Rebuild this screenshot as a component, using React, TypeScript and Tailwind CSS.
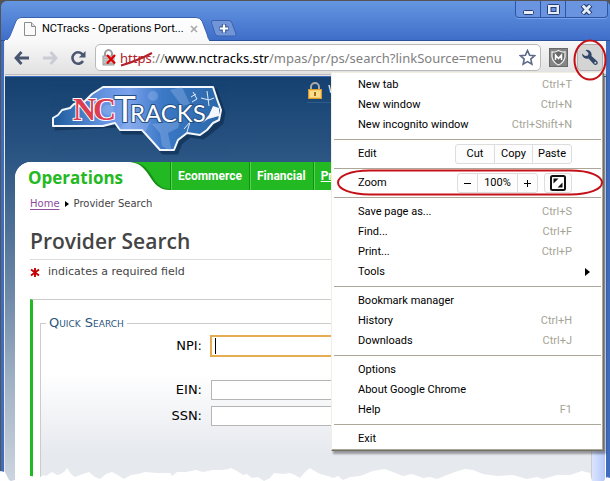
import type { ReactNode } from 'react';

interface MenuItem {
  label: string;
  shortcut?: string;
  submenu?: boolean;
}

const tabItems: MenuItem[] = [
  { label: 'New tab', shortcut: 'Ctrl+T' },
  { label: 'New window', shortcut: 'Ctrl+N' },
  { label: 'New incognito window', shortcut: 'Ctrl+Shift+N' },
];

const pageItems: MenuItem[] = [
  { label: 'Save page as...', shortcut: 'Ctrl+S' },
  { label: 'Find...', shortcut: 'Ctrl+F' },
  { label: 'Print...', shortcut: 'Ctrl+P' },
  { label: 'Tools', submenu: true },
];

const historyItems: MenuItem[] = [
  { label: 'Bookmark manager' },
  { label: 'History', shortcut: 'Ctrl+H' },
  { label: 'Downloads', shortcut: 'Ctrl+J' },
];

const optionItems: MenuItem[] = [
  { label: 'Options' },
  { label: 'About Google Chrome' },
  { label: 'Help', shortcut: 'F1' },
];

const navItems = ['Ecommerce', 'Financial', 'Pr'];

// Torn paper edge along the bottom of the window
const TORN_EDGE =
  '0,7 5,8 9,16 11,17 30,12 40,13 44,11 46,12 52,8 57,11 61,10 65,7 67,4 71,10 75,13 80,11 89,8 95,13 100,15 106,10 112,8 116,10 124,15 131,11 138,10 145,8 157,9 170,9 172,12 177,8 186,8 196,6 203,8 213,6 222,6 229,5 231,4 237,7 243,11 247,10 252,14 258,13 264,17 270,14 274,9 283,10 290,9 295,11 300,14 305,8 310,4 313,6 320,10 328,12 333,14 338,12 343,16 350,13 360,12 373,7 385,5 393,8 403,12 412,10 423,14 430,13 437,15 447,11 455,8 465,5 473,6 483,10 497,12 513,11 527,15 537,13 543,15 557,11 570,11 582,7 590,9 592,17 603,18 607,13 610,14 610,22 0,22';

function TitleBar() {
  return (
    <div className="flex h-10 items-start justify-between border-b border-[#2b529c] bg-gradient-to-b from-[#6596e1] to-[#3f6ec9]">
      <div className="flex h-full items-end pl-[3px]">
        <div className="relative -mb-px flex h-6 w-[206px] items-center pb-px">
          <svg className="absolute inset-0" width="206" height="24" viewBox="0 0 206 24">
            <defs>
              <linearGradient id="tab" x1="0" y1="0" x2="0" y2="1">
                <stop offset="0" stopColor="#ffffff" />
                <stop offset="1" stopColor="#f8f8f8" />
              </linearGradient>
            </defs>
            <path d="M0 24C5 23 6 19 8 14L12 4Q13.500 .5 17 .5H192Q196 .5 198 4L203 17Q204 22 206 24Z" fill="url(#tab)" stroke="#3861ae" />
            <path d="M1 24H205" stroke="#f8f8f8" strokeWidth="2" />
          </svg>
          <svg className="relative ml-5" width="12" height="14" viewBox="0 0 12 14">
            <path d="M.5 .5H7.500L11.500 4.500V13.500H.5Z" fill="#fafafa" stroke="#8d8d8d" />
            <path d="M7.500 .5V4.500H11.500" fill="#ddd" stroke="#8d8d8d" />
          </svg>
          <span className="relative ml-[6px] flex-1 font-['Roboto',sans-serif] text-[11px] leading-4 whitespace-nowrap text-black">
            NCTracks - Operations Port...
          </span>
          <button type="button" aria-label="Close tab" className="relative mr-3">
            <svg width="8" height="8" viewBox="0 0 8 8">
              <path d="M1 1L7 7M7 1L1 7" stroke="#aaa" strokeWidth="1.700" />
            </svg>
          </button>
        </div>
        <button type="button" aria-label="Open new tab" className="mb-[3px]">
          <svg width="27" height="17" viewBox="0 0 27 17">
            <path d="M3 .5H19Q21 .5 22 3L26 14Q26.500 16 24.500 16H8Q6 16 5 13.500L1.500 3Q1 .5 3 .5Z" fill="#7295d8" stroke="#3b62ad" />
            <path d="M14 4V13M9.500 8.500H18.500" stroke="#3b5d9c" strokeWidth="4.500" />
            <path d="M14 4.500V12.500M10 8.500H18" stroke="#fff" strokeWidth="2.200" />
          </svg>
        </button>
      </div>
      <div className="mr-[2px] flex h-[17px] rounded-b border border-t-0 border-[#2c55a3] bg-[#6a94df] shadow-[0_1px_0_#7ba2e8]">
        <button type="button" aria-label="Minimize" className="flex w-[25px] items-center justify-center border-r border-[#2c55a3]">
          <svg width="13" height="12" viewBox="0 0 13 12">
            <rect x="1.500" y="7.500" width="10" height="4" rx="1" fill="#e6ecf8" stroke="#243f78" />
          </svg>
        </button>
        <button type="button" aria-label="Maximize" className="flex w-[25px] items-center justify-center border-r border-[#2c55a3]">
          <svg width="13" height="11" viewBox="0 0 13 11">
            <rect x=".5" y=".5" width="12" height="10" rx="1" fill="#e6ecf8" stroke="#243f78" />
            <rect x="4" y="3.500" width="5" height="4" fill="#6a94df" stroke="#243f78" />
          </svg>
        </button>
        <button type="button" aria-label="Close" className="flex w-[41px] items-center justify-center">
          <svg width="13" height="11" viewBox="0 0 13 11">
            <path d="M2.500 1L10.500 10M10.500 1L2.500 10" stroke="#243f78" strokeWidth="5" />
            <path d="M2.800 1.500L10.200 9.500M10.200 1.500L2.800 9.500" stroke="#e6ecf8" strokeWidth="2.700" />
          </svg>
        </button>
      </div>
    </div>
  );
}

function Toolbar() {
  return (
    <div className="flex h-[34px] items-center border-b border-[#bdbdbd] bg-gradient-to-b from-[#f8f8f8] to-[#e1e1e1] pr-[3px] pl-[9px]">
      <button type="button" aria-label="Back">
        <svg width="15" height="14" viewBox="0 0 15 14">
          <path d="M7.500 1L2 7L7.500 13M2 7H15" fill="none" stroke="#48566f" strokeWidth="2.800" />
        </svg>
      </button>
      <button type="button" aria-label="Forward" className="ml-[14px]">
        <svg width="15" height="14" viewBox="0 0 15 14">
          <path d="M7.500 1L13 7L7.500 13M13 7H0" fill="none" stroke="#c9ccd4" strokeWidth="2.800" />
        </svg>
      </button>
      <button type="button" aria-label="Reload" className="ml-3">
        <svg width="16" height="16" viewBox="0 0 16 16">
          <path d="M12.500 4.300A5.700 5.700 0 1 0 13 11" fill="none" stroke="#48566f" strokeWidth="2.600" />
          <path d="M15.500 1V7.500H8.800Z" fill="#48566f" />
        </svg>
      </button>
      <div className="relative ml-[9px] flex h-[27px] min-w-0 flex-1 items-center rounded-[5px] border border-[#b9b9b9] bg-white pr-1 pl-[6px]">
        <svg className="shrink-0" width="15" height="17" viewBox="0 0 15 17">
          <path d="M3 8V5A3.500 4 0 0 1 10 5V8" fill="none" stroke="#9a9a9a" strokeWidth="2" />
          <rect x="1" y="7" width="11" height="9" fill="#c9c9c9" stroke="#999" />
          <path d="M2 9.500H11M2 12H11M2 14.500H11" stroke="#aaa" />
          <path d="M5 6L13 14.500M13 6L5 14.500" stroke="#e00000" strokeWidth="2.300" />
        </svg>
        <a
          href="#address"
          className="relative ml-[3px] flex-1 overflow-hidden font-['Noto_Sans',sans-serif] text-[13px] leading-5 whitespace-nowrap text-[#808080]"
        >
          <span className="text-[#b3202a]">https</span>://<span className="text-black">www.nctracks.str</span>
          /mpas/pr/ps/search?linkSource=menu
          <svg className="absolute top-1 left-0" width="34" height="15" viewBox="0 0 34 15">
            <path d="M1 13.500Q17 9 32 1" fill="none" stroke="#b3202a" strokeWidth="2" />
          </svg>
        </a>
        <button type="button" aria-label="Bookmark this page" className="shrink-0">
          <svg width="17" height="17" viewBox="0 0 17 17">
            <path d="M8.500 1.500L10.600 6.200L15.600 6.700L11.800 10.100L12.900 15.200L8.500 12.600L4.100 15.200L5.200 10.100L1.400 6.700L6.400 6.200Z" fill="#fff" stroke="#5d6b88" strokeWidth="1.600" />
          </svg>
        </button>
      </div>
      <button type="button" aria-label="McAfee SiteAdvisor" className="ml-2">
        <svg width="19" height="19" viewBox="0 0 19 19">
          <rect x=".5" y=".5" width="18" height="18" fill="#858585" stroke="#696969" />
          <path d="M9.500 2.500Q6 4.500 3 4V9Q4 14.500 9.500 17Q15 14.500 16 9V4Q13 4.500 9.500 2.500Z" fill="#6a6a6a" stroke="#eee" strokeWidth="1.300" />
          <path d="M6.500 12V7L9.500 10.500L12.500 7V12" fill="none" stroke="#fff" strokeWidth="1.500" />
        </svg>
      </button>
      <button
        type="button"
        aria-label="Customize and control"
        aria-haspopup="menu"
        className="relative ml-[9px] flex h-[27px] w-[26px] items-center justify-center rounded border border-[#b0b0b0] bg-[#d4d4d4]"
      >
        <svg width="18" height="17" viewBox="0 0 18 17">
          <path d="M4.500 1A5 5 0 0 1 10.500 7L16 12Q17.500 14 16 15.500Q14 16.500 12.500 15L7.500 9.500A5 5 0 0 1 1 4.500L4 7L7 6.500L7.500 4Z" fill="#33476b" />
          <circle cx="14.300" cy="13.700" r="1" fill="#d4d4d4" />
        </svg>
        <svg className="pointer-events-none absolute -top-[6px] -left-[5px] z-30" width="34" height="42" viewBox="0 0 34 42">
          <ellipse cx="17" cy="21" rx="15.500" ry="19.500" fill="none" stroke="#c41016" strokeWidth="2" />
        </svg>
      </button>
    </div>
  );
}

function Logo() {
  return (
    <svg role="img" aria-label="NCTracks" width="180" height="74" viewBox="50 82 180 74">
      <defs>
        <linearGradient id="state" x1="0" y1="0" x2="1" y2="0">
          <stop offset="0" stopColor="#1d5a9c" />
          <stop offset=".3" stopColor="#6493e0" />
          <stop offset=".45" stopColor="#7ba1ec" />
          <stop offset=".65" stopColor="#3c79c6" />
          <stop offset="1" stopColor="#2a67a8" />
        </linearGradient>
        <clipPath id="stateClip">
          <path d="M53 126V118L58 115L62 110L70 108L74 104L84 102L92 94L103 87H213L217 99L221 110L219 120L213 123L207 130L200 135L187 133L178 140L174 150H160L142 130H120L115 123L103 126Z" />
        </clipPath>
      </defs>
      <path d="M56 129V121L61 118L65 113L73 111L87 105L106 90H216L224 113L222 123L210 133L203 138L190 136L181 143L177 153H163L145 133H123L118 126Z" fill="#0c2b4e" stroke="#0c2b4e" strokeWidth="3" opacity=".6" />
      <path d="M53 126V118L58 115L62 110L70 108L74 104L84 102L92 94L103 87H213L217 99L221 110L219 120L213 123L207 130L200 135L187 133L178 140L174 150H160L142 130H120L115 123L103 126Z" fill="url(#state)" stroke="#f4f7fb" strokeWidth="2" strokeLinejoin="round" />
      <g clipPath="url(#stateClip)" fill="#9dbdf0" opacity=".35">
        <circle cx="153" cy="96" r="5" />
        <ellipse cx="108" cy="110" rx="6" ry="5" />
        <path d="M118 130L132 118L150 122L145 133ZM152 124L180 121L178 128L168 133L172 152L162 146L160 133ZM170 90L182 87L190 104L182 106Z" />
      </g>
      <path d="M193 92L197 99L192 102M201 98L209 100L214 98M207 91L209 106M184 129L190 122L187 132M191 97L196 94" fill="none" stroke="#dfeafa" />
      <path d="M213 106L219 108L219 116L208 119L202 123L209 115Z" fill="#f4f7fb" />
      <g className="font-['Liberation_Serif',serif] font-bold" fontSize="32" fill="#dd3d50" stroke="#fff" strokeWidth="2" paintOrder="stroke">
        <text x="73" y="120">N</text>
        <text x="93" y="120">C</text>
      </g>
      <g className="font-['Lato',sans-serif]" fill="#fff" stroke="#244f83" strokeWidth="2" paintOrder="stroke">
        <text x="114" y="122" fontSize="37">T</text>
        <text x="130" y="122" fontSize="24">RACKS</text>
      </g>
    </svg>
  );
}

function SearchField({ id, label, focused = false }: { id: string; label: string; focused?: boolean }) {
  return (
    <div className="flex items-center">
      <label htmlFor={id} className="w-[161px] text-right text-[13px] leading-5 text-black">
        {label}
      </label>
      {focused ? (
        <div className="relative ml-[9px] flex-1">
          <input id={id} type="text" className="block h-5 w-full border border-[#a5acb8] bg-white px-1 text-[13px] outline-2 -outline-offset-1 outline-[#e5ad52]" />
          <span className="absolute top-[2px] left-1 h-4 w-px bg-black" />
        </div>
      ) : (
        <input id={id} type="text" className="ml-[9px] h-5 flex-1 border border-[#b5b5b5] bg-white px-1 text-[13px]" />
      )}
    </div>
  );
}

function PortalPage() {
  return (
    <div className="flex min-w-0 flex-1 flex-col overflow-hidden bg-[linear-gradient(to_bottom,#144170_0px,#2b5583_80px,#6f8aa8_220px,#a3b3c7_310px,#cbd3de_400px)] pl-[10px]">
      <header className="flex h-[85px] items-start pt-[5px]">
        <div className="ml-[35px]">
          <Logo />
        </div>
        <div className="ml-[77px] flex h-[21px] flex-1 items-start border-b border-[#2d5c8c]">
          <svg width="16" height="17" viewBox="0 0 16 17">
            <path d="M4 8V5A4 4 0 0 1 12 5V8" fill="none" stroke="#aaa" strokeWidth="2" />
            <rect x="1.500" y="7.500" width="13" height="9" fill="#f5cc69" stroke="#dc9c2d" />
            <path d="M3 10H13M3 12H13M3 14H13" stroke="#fff0b5" />
            <rect x="7" y="10" width="2" height="4" fill="#a66c16" />
          </svg>
          <span className="ml-[5px] text-[11px] leading-4 text-white">W</span>
        </div>
      </header>
      <main className="flex-1 overflow-hidden rounded-tl-2xl bg-white">
        <nav className="flex h-7 items-stretch bg-white">
          <a href="#operations" className="w-[115px] pl-[13px] font-['Open_Sans',sans-serif] text-[17px] leading-8 font-bold text-[#22b922]">
            Operations
          </a>
          <svg className="shrink-0" width="40" height="28" viewBox="0 0 40 28">
            <path d="M0 0C22 2 18 28 40 28V0Z" fill="#168e18" />
            <path d="M3 0C24 2 21 27 40 27V0Z" fill="#22b922" />
          </svg>
          <div className="flex flex-1 bg-[#22b922] font-['Roboto',sans-serif] text-[12px] leading-7 font-bold text-white">
            {navItems.map((item) => (
              <a
                key={item}
                href={`#${item.toLowerCase()}`}
                className="border-l border-[#109110] px-[7px] shadow-[inset_1px_0_0_#54d354] last:underline"
              >
                {item}
              </a>
            ))}
          </div>
        </nav>
        <div className="pl-[15px]">
          <div className="mt-[6px] flex items-center text-[10px] leading-4 text-[#444]">
            <a href="#home" className="text-[#8e4d9e] underline underline-offset-2">
              Home
            </a>
            <svg className="mx-[5px]" width="4" height="6" viewBox="0 0 4 6">
              <path d="M0 0L4 3L0 6Z" fill="#000" />
            </svg>
            <span>Provider Search</span>
          </div>
          <h1 className="mt-[13px] border-b border-[#ddd] pb-[2px] font-['Open_Sans',sans-serif] text-[21px] leading-8 font-semibold text-[#444]">
            Provider Search
          </h1>
          <p className="mt-1 flex items-center text-[11px] leading-4 text-[#444]">
            <svg className="mr-2" width="10" height="9" viewBox="0 0 10 9">
              <path d="M5 0V9M1 1.500L9 7.500M9 1.500L1 7.500" stroke="#c60000" strokeWidth="1.900" />
            </svg>
            indicates a required field
          </p>
          <form className="mt-[19px] border-t border-l-[3px] border-t-[#ccc] border-l-[#22b922] pt-[15px] pl-[7px]">
            <fieldset className="relative h-[170px] border border-[#ccc]">
              <legend className="ml-[5px] px-[3px] text-[13px] leading-4 text-[#2c567d] [font-variant:small-caps]">
                Quick Search
              </legend>
              <div className="-mt-2 h-[175px] bg-[linear-gradient(to_bottom,#ffffff_50px,#e6e9ee_130px)] bg-clip-content pt-2">
                <div className="pt-[5px]">
                  <SearchField id="npi" label="NPI:" focused />
                  <div className="mt-6 flex flex-col gap-[6px]">
                    <SearchField id="ein" label="EIN:" />
                    <SearchField id="ssn" label="SSN:" />
                  </div>
                </div>
              </div>
            </fieldset>
          </form>
        </div>
      </main>
    </div>
  );
}

function MenuRow({ item }: { item: MenuItem }) {
  return (
    <button type="button" role="menuitem" className="flex h-5 w-full items-center justify-between pr-[31px] pl-[26px] text-left hover:bg-[#e8eefa]">
      <span>{item.label}</span>
      {item.shortcut && <span className="text-[#a5a496]">{item.shortcut}</span>}
      {item.submenu && (
        <svg className="-mr-[18px]" width="5" height="8" viewBox="0 0 5 8">
          <path d="M0 0L5 4L0 8Z" fill="#000" />
        </svg>
      )}
    </button>
  );
}

function MenuGroup({ items }: { items: MenuItem[] }) {
  return (
    <>
      {items.map((item) => (
        <MenuRow key={item.label} item={item} />
      ))}
    </>
  );
}

function Divider() {
  return <hr className="mx-[2px] my-1 border-t border-[#aca899]" />;
}

function ButtonStrip({ children }: { children: ReactNode }) {
  return <div className="flex h-5 divide-x divide-[#ddd] rounded-[3px] border border-[#ddd] bg-[#fdfdfd]">{children}</div>;
}

function ChromeMenu() {
  return (
    <div
      role="menu"
      className="absolute top-[72px] right-[6px] z-20 w-[273px] border border-t-[#f1efe2] border-r-[#716f64] border-b-[#716f64] border-l-[#f1efe2] bg-white pt-[2px] pb-px font-['Roboto',sans-serif] text-[11px] leading-5 text-black shadow-[inset_-1px_-1px_0_#aca899,2px_3px_2px_rgba(0,0,0,0.35)]"
    >
      <MenuGroup items={tabItems} />
      <Divider />
      <div className="flex h-5 items-center justify-between pr-[31px] pl-[26px]">
        <span>Edit</span>
        <ButtonStrip>
          <button type="button" className="flex w-[39px] items-center justify-center">Cut</button>
          <button type="button" className="flex w-[38px] items-center justify-center">Copy</button>
          <button type="button" className="flex w-[38px] items-center justify-center">Paste</button>
        </ButtonStrip>
      </div>
      <Divider />
      <div className="relative flex h-5 items-center pr-[31px] pl-[26px]">
        <span className="flex-1">Zoom</span>
        <ButtonStrip>
          <button type="button" aria-label="Zoom out" className="flex w-5 items-center justify-center">
            <svg width="7" height="7" viewBox="0 0 7 7">
              <path d="M0 3.500H7" stroke="#000" />
            </svg>
          </button>
          <span className="flex w-10 items-center justify-center">100%</span>
          <button type="button" aria-label="Zoom in" className="flex w-[19px] items-center justify-center">
            <svg width="7" height="7" viewBox="0 0 7 7">
              <path d="M0 3.500H7M3.500 0V7" stroke="#000" />
            </svg>
          </button>
        </ButtonStrip>
        <div className="ml-[6px]">
          <ButtonStrip>
            <button type="button" aria-label="Full screen" className="flex w-[26px] items-center justify-center">
              <svg width="16" height="16" viewBox="0 0 16 16">
                <rect x="1" y="1" width="14" height="14" rx="1.500" fill="#fff" stroke="#111" strokeWidth="2" />
                <path d="M3.500 3.500H8.500L3.500 8.500ZM12.500 12.500H7.500L12.500 7.500Z" fill="#111" />
              </svg>
            </button>
          </ButtonStrip>
        </div>
        <svg className="pointer-events-none absolute -top-1 right-0" width="266" height="27" viewBox="0 0 266 27">
          <path d="M33 1.500H233C253 1.500 265 7 265 13.500S253 25.500 233 25.500H33C13 25.500 1 20 1 13.500S13 1.500 33 1.500Z" fill="none" stroke="#c41016" strokeWidth="2" />
        </svg>
      </div>
      <Divider />
      <MenuGroup items={pageItems} />
      <Divider />
      <MenuGroup items={historyItems} />
      <Divider />
      <MenuGroup items={optionItems} />
      <Divider />
      <MenuRow item={{ label: 'Exit' }} />
    </div>
  );
}

export default function App() {
  return (
    <div className="relative flex min-h-screen flex-col overflow-hidden bg-[#545454] pt-px pl-px font-['DejaVu_Sans',sans-serif]">
      <div className="flex flex-1 flex-col overflow-hidden rounded-t-md bg-[#3f6cbd]">
        <TitleBar />
        <div className="mr-1 ml-[3px] flex flex-1 flex-col border-l border-[#e8e8e8]">
          <Toolbar />
          <div className="flex flex-1 border-t border-[#e4e4e4] pt-px">
            <PortalPage />
            <div className="w-[14px] border-r border-white bg-gradient-to-r from-[#dce5ff] to-[#b5c8f8]" />
          </div>
        </div>
      </div>
      <ChromeMenu />
      <svg className="pointer-events-none absolute bottom-0 left-0 z-10 h-[21px] w-full" viewBox="0 0 610 21" preserveAspectRatio="none">
        <polygon points={TORN_EDGE} fill="#fff" />
      </svg>
    </div>
  );
}
